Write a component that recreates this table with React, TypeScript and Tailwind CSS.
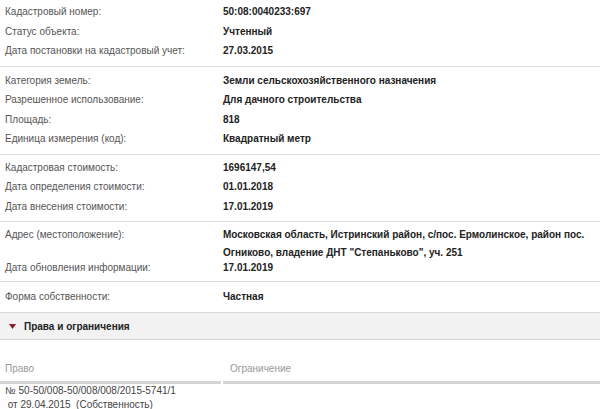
import * as React from "react"

type Row = { label: string; value: React.ReactNode; tall?: boolean }

const groups: { rows: Row[]; pt: string; pb: string }[] = [
  {
    pt: "pt-[2px]",
    pb: "pb-[5px]",
    rows: [
      { label: "Кадастровый номер:", value: "50:08:0040233:697" },
      { label: "Статус объекта:", value: "Учтенный" },
      { label: "Дата постановки на кадастровый учет:", value: "27.03.2015" },
    ],
  },
  {
    pt: "pt-[4px]",
    pb: "pb-[5px]",
    rows: [
      { label: "Категория земель:", value: "Земли сельскохозяйственного назначения" },
      { label: "Разрешенное использование:", value: "Для дачного строительства" },
      { label: "Площадь:", value: "818" },
      { label: "Единица измерения (код):", value: "Квадратный метр" },
    ],
  },
  {
    pt: "pt-[3px]",
    pb: "pb-[5px]",
    rows: [
      { label: "Кадастровая стоимость:", value: "1696147,54" },
      { label: "Дата определения стоимости:", value: "01.01.2018" },
      { label: "Дата внесения стоимости:", value: "17.01.2019" },
    ],
  },
  {
    pt: "pt-[3px]",
    pb: "pb-[3px]",
    rows: [
      {
        label: "Адрес (местоположение):",
        value: (
          <>
            Московская область, Истринский район, с/пос. Ермолинское, район пос.
            <br />
            Огниково, владение ДНТ "Степаньково", уч. 251
          </>
        ),
        tall: true,
      },
      { label: "Дата обновления информации:", value: "17.01.2019" },
    ],
  },
  {
    pt: "pt-[5px]",
    pb: "pb-[6px]",
    rows: [{ label: "Форма собственности:", value: "Частная" }],
  },
]

function InfoRow({ label, value, tall }: Row) {
  return (
    <div className={tall ? "flex h-[33px] pt-[1px] leading-[18px]" : "flex h-[19.5px] items-center"}>
      <div className="w-[223px] shrink-0 pl-[5px] text-[#555]">{label}</div>
      <div className="font-bold whitespace-nowrap text-[#222]">{value}</div>
    </div>
  )
}

export default function App() {
  return (
    <div
      className="h-[409px] w-[600px] overflow-hidden bg-white text-[10px]"
      style={{ fontFamily: '"Liberation Sans", Arial, sans-serif' }}
    >
      {groups.map((group, i) => (
        <div
          key={i}
          className={`${group.pt} ${group.pb} ${i > 0 ? "border-t border-[#dcdcdc]" : ""}`}
        >
          {group.rows.map((row) => (
            <InfoRow key={row.label} {...row} />
          ))}
        </div>
      ))}

      <div className="flex h-[28px] items-center border-y border-[#d6d6d6] bg-[#f2f2f2] pl-[9px]">
        <svg width="7" height="5" viewBox="0 0 7 5" className="mr-[8px]">
          <path d="M0 0 L7 0 L3.5 5 Z" fill="#8e1b2c" />
        </svg>
        <span className="font-bold text-[#222]">Права и ограничения</span>
      </div>

      <div className="flex pt-[22px]">
        <div className="w-[221px] shrink-0">
          <div className="pb-[5px] pl-[5px] leading-[14px] text-[#999]">Право</div>
          <div className="h-[3px] bg-[#d4d4d4]" />
        </div>
        <div className="ml-[2px] flex-1">
          <div className="pb-[5px] pl-[7px] leading-[14px] text-[#999]">Ограничение</div>
          <div className="h-[3px] bg-[#d4d4d4]" />
        </div>
      </div>

      <div className="pl-[5px] leading-[14px] text-[#444]">
        <div>№ 50-50/008-50/008/008/2015-5741/1</div>
        <div className="whitespace-pre"> от 29.04.2015  (Собственность)</div>
      </div>
    </div>
  )
}
